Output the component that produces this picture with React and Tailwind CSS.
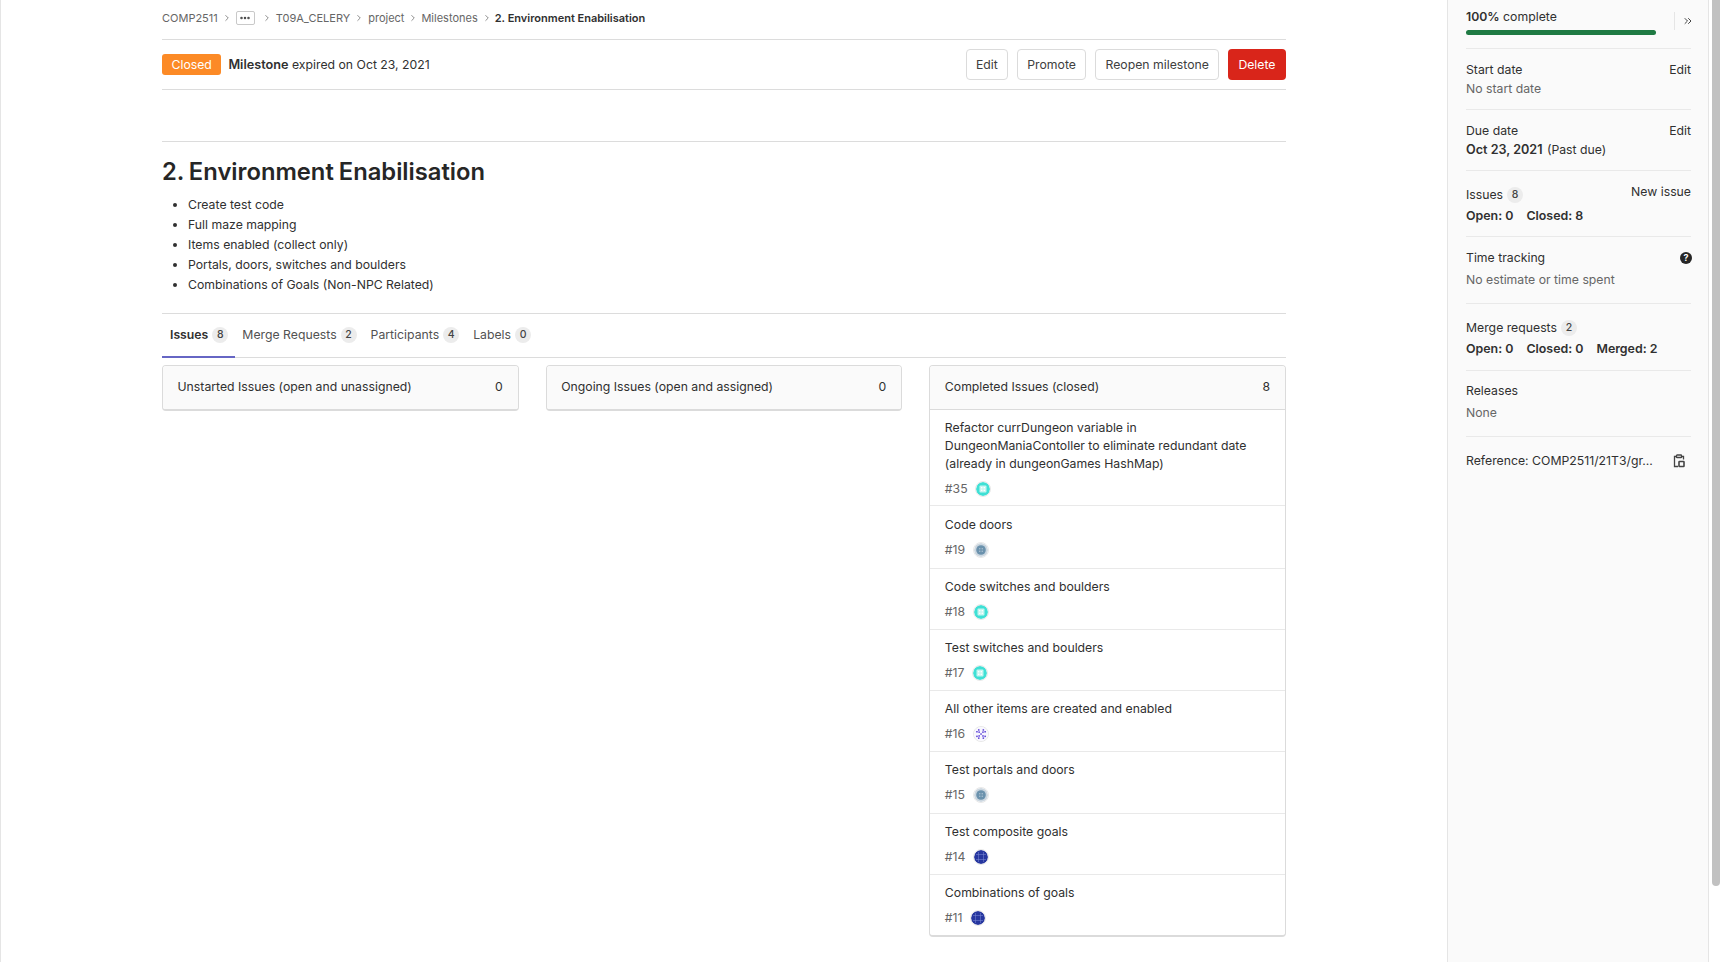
import React from "react";
import { ChevronRight, ChevronsRight, Ellipsis } from "lucide-react";

const crumbs = [
  { label: "COMP2511", gap: "mx-[4px]" },
  { label: "...", gap: "ml-[7px] mr-[4px]" },
  { label: "T09A_CELERY", gap: "mx-[4px]" },
  { label: "project", gap: "ml-[4px] mr-[3px]" },
  { label: "Milestones", gap: "ml-[4px] mr-[3px]" },
];

const notes = [
  "Create test code",
  "Full maze mapping",
  "Items enabled (collect only)",
  "Portals, doors, switches and boulders",
  "Combinations of Goals (Non-NPC Related)",
];

const tabs = [
  { name: "Issues", count: 8, active: true },
  { name: "Merge Requests", count: 2 },
  { name: "Participants", count: 4 },
  { name: "Labels", count: 0 },
];

const issues = [
  { title: "Refactor currDungeon variable in DungeonManiaContoller to eliminate redundant date (already in dungeonGames HashMap)", id: 35, av: "teal", pad: "pt-[8px] pb-[6px]" },
  { title: "Code doors", id: 19, av: "slate", pad: "pt-[9px] pb-[8px]" },
  { title: "Code switches and boulders", id: 18, av: "teal", pad: "pt-[8px] pb-[7px]" },
  { title: "Test switches and boulders", id: 17, av: "teal", pad: "pt-[8px] pb-[7px]" },
  { title: "All other items are created and enabled", id: 16, av: "violet", pad: "pt-[8px] pb-[7px]" },
  { title: "Test portals and doors", id: 15, av: "slate", pad: "pt-[8px] pb-[8px]" },
  { title: "Test composite goals", id: 14, av: "navy", pad: "pt-[8px] pb-[7px]" },
  { title: "Combinations of goals", id: 11, av: "navy", pad: "pt-[8px] pb-[7px]" },
];

const Count = ({ n, className = "" }) => (
  <span className={"inline-flex items-center justify-center w-[16px] h-[16px] rounded-full bg-[#ececec] text-[10.5px] font-medium text-[#444444] " + className}>
    {n}
  </span>
);

const dots = [
  [5, 5],
  [7.6, 5],
  [5, 7.6],
  [7.6, 7.6],
];

const scatter = [
  [2.2, 4], [4, 2.2], [8.6, 2.2], [10.4, 4],
  [2.2, 8.6], [4, 10.4], [8.6, 10.4], [10.4, 8.6],
  [4.4, 4.4], [8.2, 4.4], [4.4, 8.2], [8.2, 8.2], [6.3, 6.3],
];

// gravatar style mosaics, small enough that only the rough pattern shows
const Avatar = ({ kind }) => (
  <svg width="14" height="14" viewBox="0 0 14 14" className="rounded-full box-content border border-[#e8e8e8]">
    {kind === "teal" && (
      <>
        <circle cx="7" cy="7" r="7" fill="#3fe0d5" />
        <rect x="3.5" y="3.5" width="7" height="7" rx="1" fill="#c4f6f1" />
        {dots.map(([x, y]) => <rect key={x + "-" + y} x={x} y={y} width="1.4" height="1.4" fill="#ffffff" />)}
      </>
    )}
    {kind === "slate" && (
      <>
        <circle cx="7" cy="7" r="7" fill="#ccd7e0" />
        <circle cx="7" cy="7" r="4.8" fill="#6b92ad" />
        {dots.map(([x, y]) => <rect key={x + "-" + y} x={x} y={y} width="1.4" height="1.4" fill="#a0b9cb" />)}
      </>
    )}
    {kind === "violet" && (
      <>
        <circle cx="7" cy="7" r="7" fill="#f8f7fe" />
        {scatter.map(([x, y]) => <rect key={x + "-" + y} x={x} y={y} width="1.5" height="1.5" fill="#5a3fd6" />)}
      </>
    )}
    {kind === "navy" && (
      <>
        <circle cx="7" cy="7" r="7" fill="#26369f" />
        <path d="M4.5 2v10M9.5 2v10M2 4.5h10M2 9.5h10" stroke="#7f8cd6" strokeWidth="0.5" />
      </>
    )}
  </svg>
);

const Card = ({ title, count, children }) => (
  <div className="flex-1 self-start border border-[#dbdbdb] border-b-2 rounded-[4px] bg-white overflow-hidden">
    <div className={"pl-[14.5px] pr-[15px] pb-[2px] flex items-center justify-between bg-[#fafafa] " + (children ? "h-[44px] border-b border-[#dbdbdb]" : "h-[43px]")}>
      <span>{title}</span>
      <span>{count}</span>
    </div>
    {children}
  </div>
);

export default function App() {
  return (
    <div className="flex h-[962px] overflow-hidden bg-white text-[12.25px] leading-[20px] text-[#303030] font-['Inter',sans-serif]">
      <main className="w-[1447px] shrink-0 border-l border-[#e5e5e5] pl-[161px] pr-[161px]">
        <nav className="h-[40px] pb-[3px] flex items-center text-[11px] text-[#666666] border-b border-[#dcdcdc]">
          {crumbs.map((c) => (
            <React.Fragment key={c.label}>
              {c.label === "..." ? (
                <span className="w-[19px] h-[14px] flex items-center justify-center border border-[#c9c9c9] rounded-[2px]">
                  <Ellipsis size={12} strokeWidth={3} color="#444" />
                </span>
              ) : (
                <span>{c.label}</span>
              )}
              <ChevronRight size={10} className={c.gap} color="#777" />
            </React.Fragment>
          ))}
          <span className="font-semibold text-[#303030]">2. Environment Enabilisation</span>
        </nav>

        <div className="h-[50px] flex items-center border-b border-[#dcdcdc]">
          <span className="h-[21px] px-[9.5px] flex items-center rounded-[3px] bg-[#fc8a26] text-white">Closed</span>
          <span className="ml-[7px]"><b className="font-semibold text-[12.7px]">Milestone</b> expired on Oct 23, 2021</span>
          <div className="ml-auto flex gap-[9px]">
            <button className="h-[31px] px-[9px] border border-[#dbdbdb] rounded-[4px] text-[#404040]">Edit</button>
            <button className="h-[31px] px-[9.5px] border border-[#dbdbdb] rounded-[4px] text-[#404040]">Promote</button>
            <button className="h-[31px] px-[9px] border border-[#dbdbdb] rounded-[4px] text-[#404040]">Reopen milestone</button>
            <button className="h-[31px] px-[10.5px] rounded-[4px] bg-[#d9251a] text-white">Delete</button>
          </div>
        </div>

        <div className="mt-[51px] border-t border-[#dcdcdc] pt-[14px]">
          <h1 className="text-[23.75px] leading-[32px] font-semibold text-[#262626] [word-spacing:-1px]">2. Environment Enabilisation</h1>
          <ul className="mt-[7px] pl-[26px] list-disc">
            {notes.map((n) => (
              <li key={n}>{n}</li>
            ))}
          </ul>
        </div>

        <div className="mt-[18px] h-[45px] flex border-y border-[#dcdcdc]">
          {tabs.map((t) => (
            <div key={t.name} className={"pr-[7px] pt-[11px] h-[44px] flex items-start gap-[4px] " + (t.active ? "pl-[8px] font-semibold border-b-2 border-[#6666c4]" : "pl-[7px] text-[#525252]")}>
              {t.name}
              <Count n={t.count} className="mt-[2px]" />
            </div>
          ))}
        </div>

        <div className="mt-[7px] flex gap-[27px]">
          <Card title="Unstarted Issues (open and unassigned)" count={0} />
          <Card title="Ongoing Issues (open and assigned)" count={0} />
          <Card title="Completed Issues (closed)" count={8}>
            {issues.map((i, idx) => (
              <div key={i.id} className={"pl-[14.5px] pr-[15px] " + i.pad + " " + (idx < issues.length - 1 ? "border-b border-[#e9e9e9]" : "")}>
                <div className="leading-[18px] pt-[1px]">{i.title}</div>
                <div className="mt-[6px] flex items-center gap-[7.5px] text-[#666666]">
                  #{i.id}
                  <Avatar kind={i.av} />
                </div>
              </div>
            ))}
          </Card>
        </div>
      </main>

      <aside className="w-[262px] shrink-0 border-x border-[#e5e5e5] bg-[#fafafa] pl-[18px] pr-[17px]">
        <div className="border-b border-[#e9e9e9] h-[49px] relative pt-[7px]">
          <span><b className="font-semibold">100%</b> complete</span>
          <div className="absolute left-0 top-[30px] w-[190px] h-[5px] rounded-full bg-[#1f7a43]"></div>
          <div className="absolute right-0 top-[12px] h-[18px] w-[17px] border-l border-[#e5e5e5] flex items-center justify-end">
            <ChevronsRight size={12} color="#444" className="-mr-[3px]" />
          </div>
        </div>

        <div className="pt-[11px] pb-[10px] border-b border-[#e9e9e9]">
          <div className="flex justify-between"><span>Start date</span><span>Edit</span></div>
          <div className="-mt-[1px] text-[#666666]">No start date</div>
        </div>

        <div className="pt-[11px] pb-[10px] border-b border-[#e9e9e9]">
          <div className="flex justify-between"><span>Due date</span><span>Edit</span></div>
          <div className="-mt-[1px]"><b className="font-semibold text-[12.6px]">Oct 23, 2021</b> <span className="ml-[1px]">(Past due)</span></div>
        </div>

        <div className="pt-[14px] pb-[10px] border-b border-[#e9e9e9]">
          <div className="flex justify-between">
            <span className="flex items-center gap-[4px]">Issues <Count n={8} /></span>
            <span className="-mt-[3px]">New issue</span>
          </div>
          <div className="mt-[1px] font-semibold text-[12.4px] flex gap-[13px]"><span>Open: 0</span><span>Closed: 8</span></div>
        </div>

        <div className="pt-[11px] pb-[13px] border-b border-[#e9e9e9]">
          <div className="flex justify-between items-center">
            <span>Time tracking</span>
            <svg width="12" height="12" viewBox="0 0 12 12" className="-mr-[1px]"><circle cx="6" cy="6" r="6" fill="#262626" /><text x="6" y="9.3" textAnchor="middle" fontSize="9" fontWeight="700" fill="#fff">?</text></svg>
          </div>
          <div className="mt-[2px] text-[#666666]">No estimate or time spent</div>
        </div>

        <div className="pt-[14px] pb-[11px] border-b border-[#e9e9e9]">
          <div className="flex items-center gap-[4px]">Merge requests <Count n={2} /></div>
          <div className="font-semibold text-[12.4px] mt-[1px] flex gap-[13px]"><span>Open: 0</span><span>Closed: 0</span><span>Merged: 2</span></div>
        </div>

        <div className="pt-[10px] pb-[13px] border-b border-[#e9e9e9]">
          <div>Releases</div>
          <div className="mt-[2px] text-[#666666]">None</div>
        </div>

        <div className="pt-[14px] flex items-center justify-between">
          <span>Reference: COMP2511/21T3/gr...</span>
          <svg width="12" height="14" viewBox="0 0 12 14" fill="none" stroke="#444" strokeWidth="1.3" className="mr-[6px]">
            <path d="M3 2.5H1.5V12.5H5M9 2.5H10.5V5.5" />
            <rect x="3.5" y="1" width="5" height="2.5" rx="0.6" />
            <rect x="6" y="7.5" width="5" height="5" rx="0.6" strokeWidth="1.6" />
          </svg>
        </div>
      </aside>

      <div className="flex-1 bg-white pl-[3px]">
        <div className="h-[886px] rounded-b-[5px] bg-[#c1c1c1]"></div>
      </div>
    </div>
  );
}
